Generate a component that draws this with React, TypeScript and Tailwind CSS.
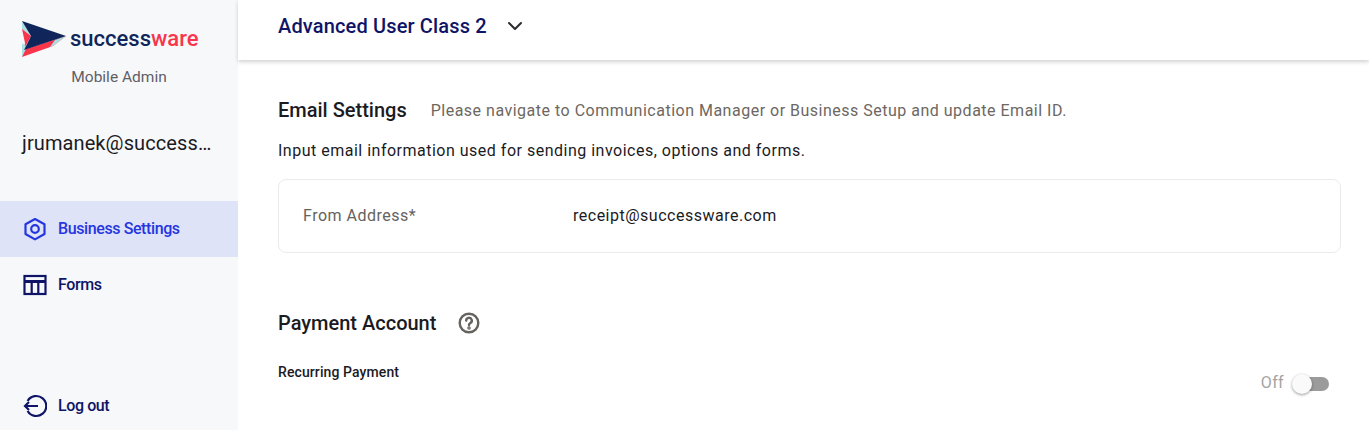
import { ChevronDown } from "lucide-react";

function Logo() {
  return (
    <div className="flex items-center gap-[4px] pl-[22px]">
      <svg width="44" height="36" viewBox="0 0 44 36" className="shrink-0">
        <polygon points="0,0 9,15 0,8" fill="#a9e0e2" />
        <polygon points="0,8 9,15 2,28 3,22" fill="#f9354c" />
        <polygon points="0,22 6,27 0,36" fill="#a9e0e2" />
        <polygon points="0,36 4,28 44,15 31,25" fill="#f9354c" />
        <polygon points="31,25 44,15 33,19 28,26" fill="#a9e0e2" />
        <polygon points="0,0 44,15 2,29 9,15" fill="#10265a" />
      </svg>
      <span className="text-[22px] leading-none font-medium text-[#10265a]">
        success<span className="text-[#f9354c]">ware</span>
      </span>
    </div>
  );
}

function HexIcon() {
  return (
    <svg width="24" height="24" viewBox="0 0 24 24" fill="none" stroke="#2536e0" strokeWidth="2.2">
      <path d="M12 2 21.5 7.2V17L12 22.4 2.5 17V7.2Z" strokeLinejoin="round" />
      <circle cx="12" cy="12" r="3.8" />
    </svg>
  );
}

function TableIcon() {
  return (
    <svg width="24" height="24" viewBox="0 0 24 24" fill="none" stroke="#0f1466" strokeWidth="2.2">
      <rect x="1.5" y="3" width="21" height="18" />
      <path d="M1.5 8.5H22.5" strokeWidth="3" />
      <path d="M8.7 9V21M15.3 9V21" />
    </svg>
  );
}

function LogoutIcon() {
  return (
    <svg width="24" height="24" viewBox="0 0 24 24" fill="none" stroke="#0f1466" strokeWidth="2.2">
      <path d="M4.6 7A10 10 0 1 1 4.6 17" />
      <path d="M15 12H2M6 8 2 12 6 16" />
    </svg>
  );
}

function NavItem({
  icon,
  label,
  active,
}: {
  icon: React.ReactNode;
  label: string;
  active?: boolean;
}) {
  return (
    <div
      className={
        active
          ? "flex h-14 items-center gap-[11px] bg-[#dfe3f7] pl-[23px] text-[#2536e0]"
          : "flex h-14 items-center gap-[11px] pl-[23px] text-[#0f1466]"
      }
    >
      {icon}
      <span className="-mt-[1px] text-base leading-6 font-medium tracking-[-0.4px]">{label}</span>
    </div>
  );
}

export default function App() {
  return (
    <div className="flex h-[430px] w-[1369px] overflow-hidden bg-white font-['Roboto',sans-serif]">
      <aside className="flex w-[238px] shrink-0 flex-col bg-[#f7f8fa]">
        <div className="pt-[21px]">
          <Logo />
          <p className="mt-[8px] text-center text-[15.5px] leading-6 text-[#5f5f66]">Mobile Admin</p>
        </div>
        <p className="mt-[40px] truncate pr-[22px] pl-[22px] text-xl leading-7 tracking-[0.1px] text-[#1b1b1f]">
          jrumanek@successware.com
        </p>
        <nav className="mt-[44px]">
          <NavItem icon={<HexIcon />} label="Business Settings" active />
          <NavItem icon={<TableIcon />} label="Forms" />
        </nav>
        <div className="mt-auto mb-[-4px]">
          <NavItem icon={<LogoutIcon />} label="Log out" />
        </div>
      </aside>

      <main className="flex min-w-0 flex-1 flex-col">
        <header className="relative z-10 flex h-[60px] items-center gap-4 pb-[8px] pl-10 shadow-[0_2px_4px_rgba(0,0,0,0.18)]">
          <span className="text-xl leading-7 font-medium tracking-[0.15px] text-[#0f1466]">
            Advanced User Class 2
          </span>
          <ChevronDown className="size-6 text-[#2b2b30]" strokeWidth={2} />
        </header>

        <div className="flex flex-col pr-7 pl-10">
          <div className="mt-[36px] flex items-center gap-6">
            <h2 className="text-xl leading-7 font-medium text-[#1b1b1f]">Email Settings</h2>
            <p className="mt-[1px] text-base leading-6 tracking-[0.5px] text-[#6d6762]">
              Please navigate to Communication Manager or Business Setup and update Email ID.
            </p>
          </div>
          <p className="mt-[15px] text-base leading-6 tracking-[0.5px] text-[#1b1b1f]">
            Input email information used for sending invoices, options and forms.
          </p>
          <div className="mt-[16px] flex h-[74px] items-center rounded-lg border border-[#ebebee] pl-6">
            <span className="w-[270px] text-base tracking-[0.5px] text-[#66625e]">From Address*</span>
            <span className="text-base tracking-[0.5px] text-[#1b1b1f]">receipt@successware.com</span>
          </div>

          <div className="mt-[56px] flex items-center gap-[21px]">
            <h2 className="text-xl leading-7 font-medium text-[#1b1b1f]">Payment Account</h2>
            <svg width="24" height="24" viewBox="0 0 24 24" fill="none" stroke="#66625e" strokeWidth="2.4">
              <circle cx="12" cy="12" r="9.3" />
              <path d="M9.2 9.6A2.8 2.8 0 1 1 13.4 12c-1 .6-1.4 1.1-1.4 2" strokeLinecap="round" />
              <circle cx="12" cy="17" r=".6" fill="#66625e" />
            </svg>
          </div>

          <div className="mt-[25px] flex items-start justify-between">
            <span className="text-sm leading-5 font-medium tracking-[0.1px] text-[#1b1b1f]">Recurring Payment</span>
            <div className="mt-[12px] mr-[12px] flex items-center gap-[9px]">
              <span className="-mt-[1px] text-base leading-5 tracking-[0.35px] text-[#a3a3a3]">Off</span>
              <span className="relative h-[14px] w-[36px] rounded-full bg-[#9b9b9b]">
                <span className="absolute top-[-3px] left-[-1px] size-5 rounded-full bg-[#fafafa] shadow-[0_1px_3px_rgba(0,0,0,0.4)]" />
              </span>
            </div>
          </div>
        </div>
      </main>
    </div>
  );
}
